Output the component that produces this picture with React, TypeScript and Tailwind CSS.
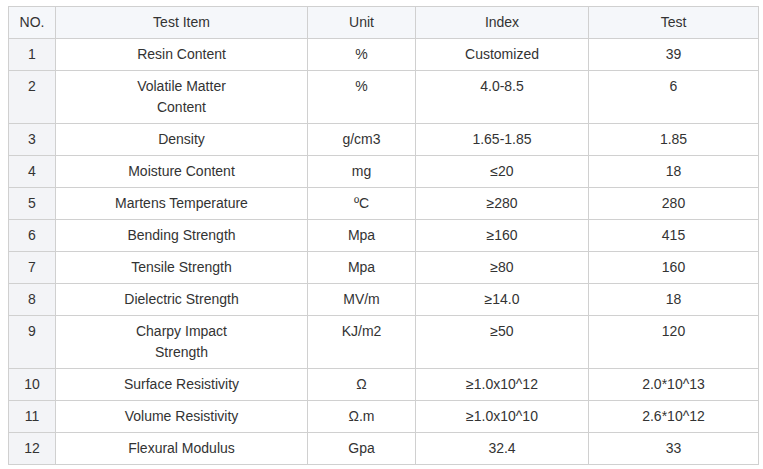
const rows: [string, string[], string, string, string][] = [
  ["1", ["Resin Content"], "%", "Customized", "39"],
  ["2", ["Volatile Matter", "Content"], "%", "4.0-8.5", "6"],
  ["3", ["Density"], "g/cm3", "1.65-1.85", "1.85"],
  ["4", ["Moisture Content"], "mg", "≤20", "18"],
  ["5", ["Martens Temperature"], "ºC", "≥280", "280"],
  ["6", ["Bending Strength"], "Mpa", "≥160", "415"],
  ["7", ["Tensile Strength"], "Mpa", "≥80", "160"],
  ["8", ["Dielectric Strength"], "MV/m", "≥14.0", "18"],
  ["9", ["Charpy Impact", "Strength"], "KJ/m2", "≥50", "120"],
  ["10", ["Surface Resistivity"], "Ω", "≥1.0x10^12", "2.0*10^13"],
  ["11", ["Volume Resistivity"], "Ω.m", "≥1.0x10^10", "2.6*10^12"],
  ["12", ["Flexural Modulus"], "Gpa", "32.4", "33"],
]

const cell = "border border-[#d0d0d0] px-2 pt-[5px] pb-[5px] text-center align-top"

export default function App() {
  return (
    <div className="bg-white w-[763px] h-[469px] pt-1.5 pl-2 font-['Liberation_Sans',Arial,sans-serif] text-[14px] leading-[21px] text-[#333]">
      <table className="table-fixed border-collapse w-[750px]">
        <colgroup>
          <col className="w-[47px]" />
          <col className="w-[252px]" />
          <col className="w-[108px]" />
          <col className="w-[173px]" />
          <col className="w-[170px]" />
        </colgroup>
        <thead>
          <tr className="bg-[#f5f7fa] h-[32px]">
            <th className={`${cell} font-normal`}>NO.</th>
            <th className={`${cell} font-normal`}>Test Item</th>
            <th className={`${cell} font-normal`}>Unit</th>
            <th className={`${cell} font-normal`}>Index</th>
            <th className={`${cell} font-normal`}>Test</th>
          </tr>
        </thead>
        <tbody>
          {rows.map(([no, item, unit, index, test]) => (
            <tr key={no}>
              <td className={`${cell} bg-[#f3f4f7]`}>{no}</td>
              <td className={cell}>
                {item.map((line, i) => (
                  <div key={i}>{line}</div>
                ))}
              </td>
              <td className={cell}>{unit}</td>
              <td className={cell}>{index}</td>
              <td className={cell}>{test}</td>
            </tr>
          ))}
        </tbody>
      </table>
    </div>
  )
}
